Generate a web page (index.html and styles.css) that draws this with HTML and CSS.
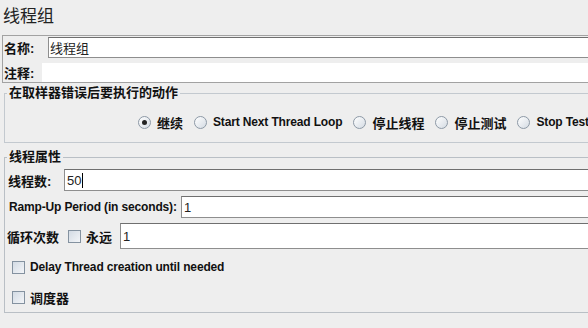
FILE: index.html
```html
<!DOCTYPE html>
<html>
<head>
<meta charset="utf-8">
<link rel="stylesheet" href="styles.css">
</head>
<body>
<div class="page">
  <div class="title">线程组</div>

  <div class="name-panel">
    <div class="np-row np-row-name">
      <span class="lbl lbl-name">名称:</span>
      <div class="field field-name">线程组</div>
    </div>
    <div class="np-row np-row-comment">
      <span class="lbl lbl-comment">注释:</span>
      <div class="field-comment"></div>
    </div>
  </div>

  <fieldset class="group group-error">
    <legend class="legend">在取样器错误后要执行的动作</legend>
    <div class="radio-row">
      <span class="radio-item"><span class="radio checked"></span><span class="lbl">继续</span></span>
      <span class="radio-item"><span class="radio"></span><span class="lbl en">Start Next Thread Loop</span></span>
      <span class="radio-item"><span class="radio"></span><span class="lbl">停止线程</span></span>
      <span class="radio-item"><span class="radio"></span><span class="lbl">停止测试</span></span>
      <span class="radio-item"><span class="radio"></span><span class="lbl en">Stop Test</span></span>
    </div>
  </fieldset>

  <fieldset class="group group-thread">
    <legend class="legend">线程属性</legend>
    <div class="form-row row-threads">
      <span class="lbl lbl-threads">线程数:</span>
      <div class="field field-tall"><span class="val">50</span><span class="caret"></span></div>
    </div>
    <div class="form-row row-ramp">
      <span class="lbl en lbl-ramp">Ramp-Up Period (in seconds):</span>
      <div class="field field-tall"><span class="val">1</span></div>
    </div>
    <div class="form-row row-loop">
      <span class="lbl lbl-loop">循环次数</span>
      <span class="check"></span>
      <span class="lbl lbl-forever">永远</span>
      <div class="field field-loop"><span class="val">1</span></div>
    </div>
    <div class="check-row row-delay">
      <span class="check"></span>
      <span class="lbl en">Delay Thread creation until needed</span>
    </div>
    <div class="check-row row-sched">
      <span class="check"></span>
      <span class="lbl lbl-sched">调度器</span>
    </div>
  </fieldset>
</div>
</body>
</html>
```

FILE: styles.css
```css
html, body {
  margin: 0;
  padding: 0;
  background: #eeeeee;
  overflow: hidden;
}

.page {
  width: 640px;
  height: 328px;
  font-family: "Liberation Sans", "Noto Sans CJK SC", sans-serif;
  font-size: 13px;
  color: #111;
}

.title {
  height: 35px;
  padding-left: 3px;
  font-size: 17px;
  line-height: 34px;
  color: #222;
}

.lbl {
  font-weight: bold;
  white-space: nowrap;
  color: #111;
}

.lbl.en {
  font-size: 12px;
  letter-spacing: -0.15px;
}

/* name / comment panel */
.name-panel {
  margin-left: 2px;
  border: 1px solid #a2a2a2;
  border-right: none;
  height: 46px;
}

.np-row {
  display: flex;
  align-items: center;
}

.np-row-name {
  height: 22px;
  align-items: flex-end;
}

.lbl-name {
  width: 44px;
  padding-left: 1px;
  align-self: center;
  margin-top: 1px;
}

.field {
  flex: 1;
  background: #fff;
  border: 1px solid #8e8e8e;
  border-top-color: #6f6f6f;
  box-sizing: border-box;
  display: flex;
  align-items: center;
  padding-left: 1px;
  font-weight: normal;
  color: #222;
}

.field-name {
  height: 21px;
  padding-left: 1px;
}

.np-row-comment {
  margin-top: 5px;
  height: 19px;
}

.lbl-comment {
  width: 38px;
  padding-left: 1px;
}

.field-comment {
  flex: 1;
  height: 19px;
  background: #fff;
}

/* titled groups */
.group {
  margin: 0;
  padding: 0;
  min-width: 0;
  border: 1px solid #c3c9cf;
  border-right: none;
}

.legend {
  padding: 0 2px;
  margin-left: 2px;
  font-weight: bold;
  line-height: 16px;
  color: #111;
}

.group-error {
  margin: 2px 0 0 4px;
  padding-bottom: 8px;
}

.radio-row {
  display: flex;
  align-items: center;
  height: 24px;
  margin-top: 9px;
  padding-left: 133px;
  white-space: nowrap;
  overflow: hidden;
}

.radio-item {
  display: flex;
  align-items: center;
  margin-right: 11px;
  flex: none;
}

.radio {
  width: 11px;
  height: 11px;
  border: 1px solid #8d99a6;
  border-radius: 50%;
  background: linear-gradient(to bottom right, #ffffff, #d4dbe3);
  margin-right: 6px;
  position: relative;
  flex: none;
}

.radio.checked::after {
  content: "";
  position: absolute;
  left: 3px;
  top: 3px;
  width: 5px;
  height: 5px;
  border-radius: 50%;
  background: #222;
}

.group-thread {
  margin: 6px 0 0 4px;
  padding-bottom: 0;
  border-color: #b9bfc5;
}

.form-row {
  display: flex;
  align-items: center;
  margin-top: 5px;
}

.row-threads {
  margin-top: 4px;
}

.field-tall {
  height: 22px;
}

.field-loop {
  height: 26px;
}

.lbl-threads {
  width: 56px;
  padding-left: 3px;
}

.lbl-ramp {
  width: 172px;
  padding-left: 4px;
}

.lbl-loop {
  padding-left: 2px;
  margin-right: 9px;
}

.lbl-forever {
  margin-right: 8px;
}

.check {
  width: 11px;
  height: 11px;
  border: 1px solid #8492a0;
  background: linear-gradient(to bottom right, #d3dbe4, #f3f5f8);
  margin-right: 5px;
  flex: none;
}

.val {
  font-size: 13px;
  padding-left: 1px;
}

.caret {
  display: inline-block;
  width: 1px;
  height: 15px;
  background: #000;
  margin-left: 1px;
}

.check-row {
  display: flex;
  align-items: center;
  padding-left: 7px;
}

.row-delay {
  margin-top: 3px;
  height: 30px;
}

.row-sched {
  height: 30px;
}
```
